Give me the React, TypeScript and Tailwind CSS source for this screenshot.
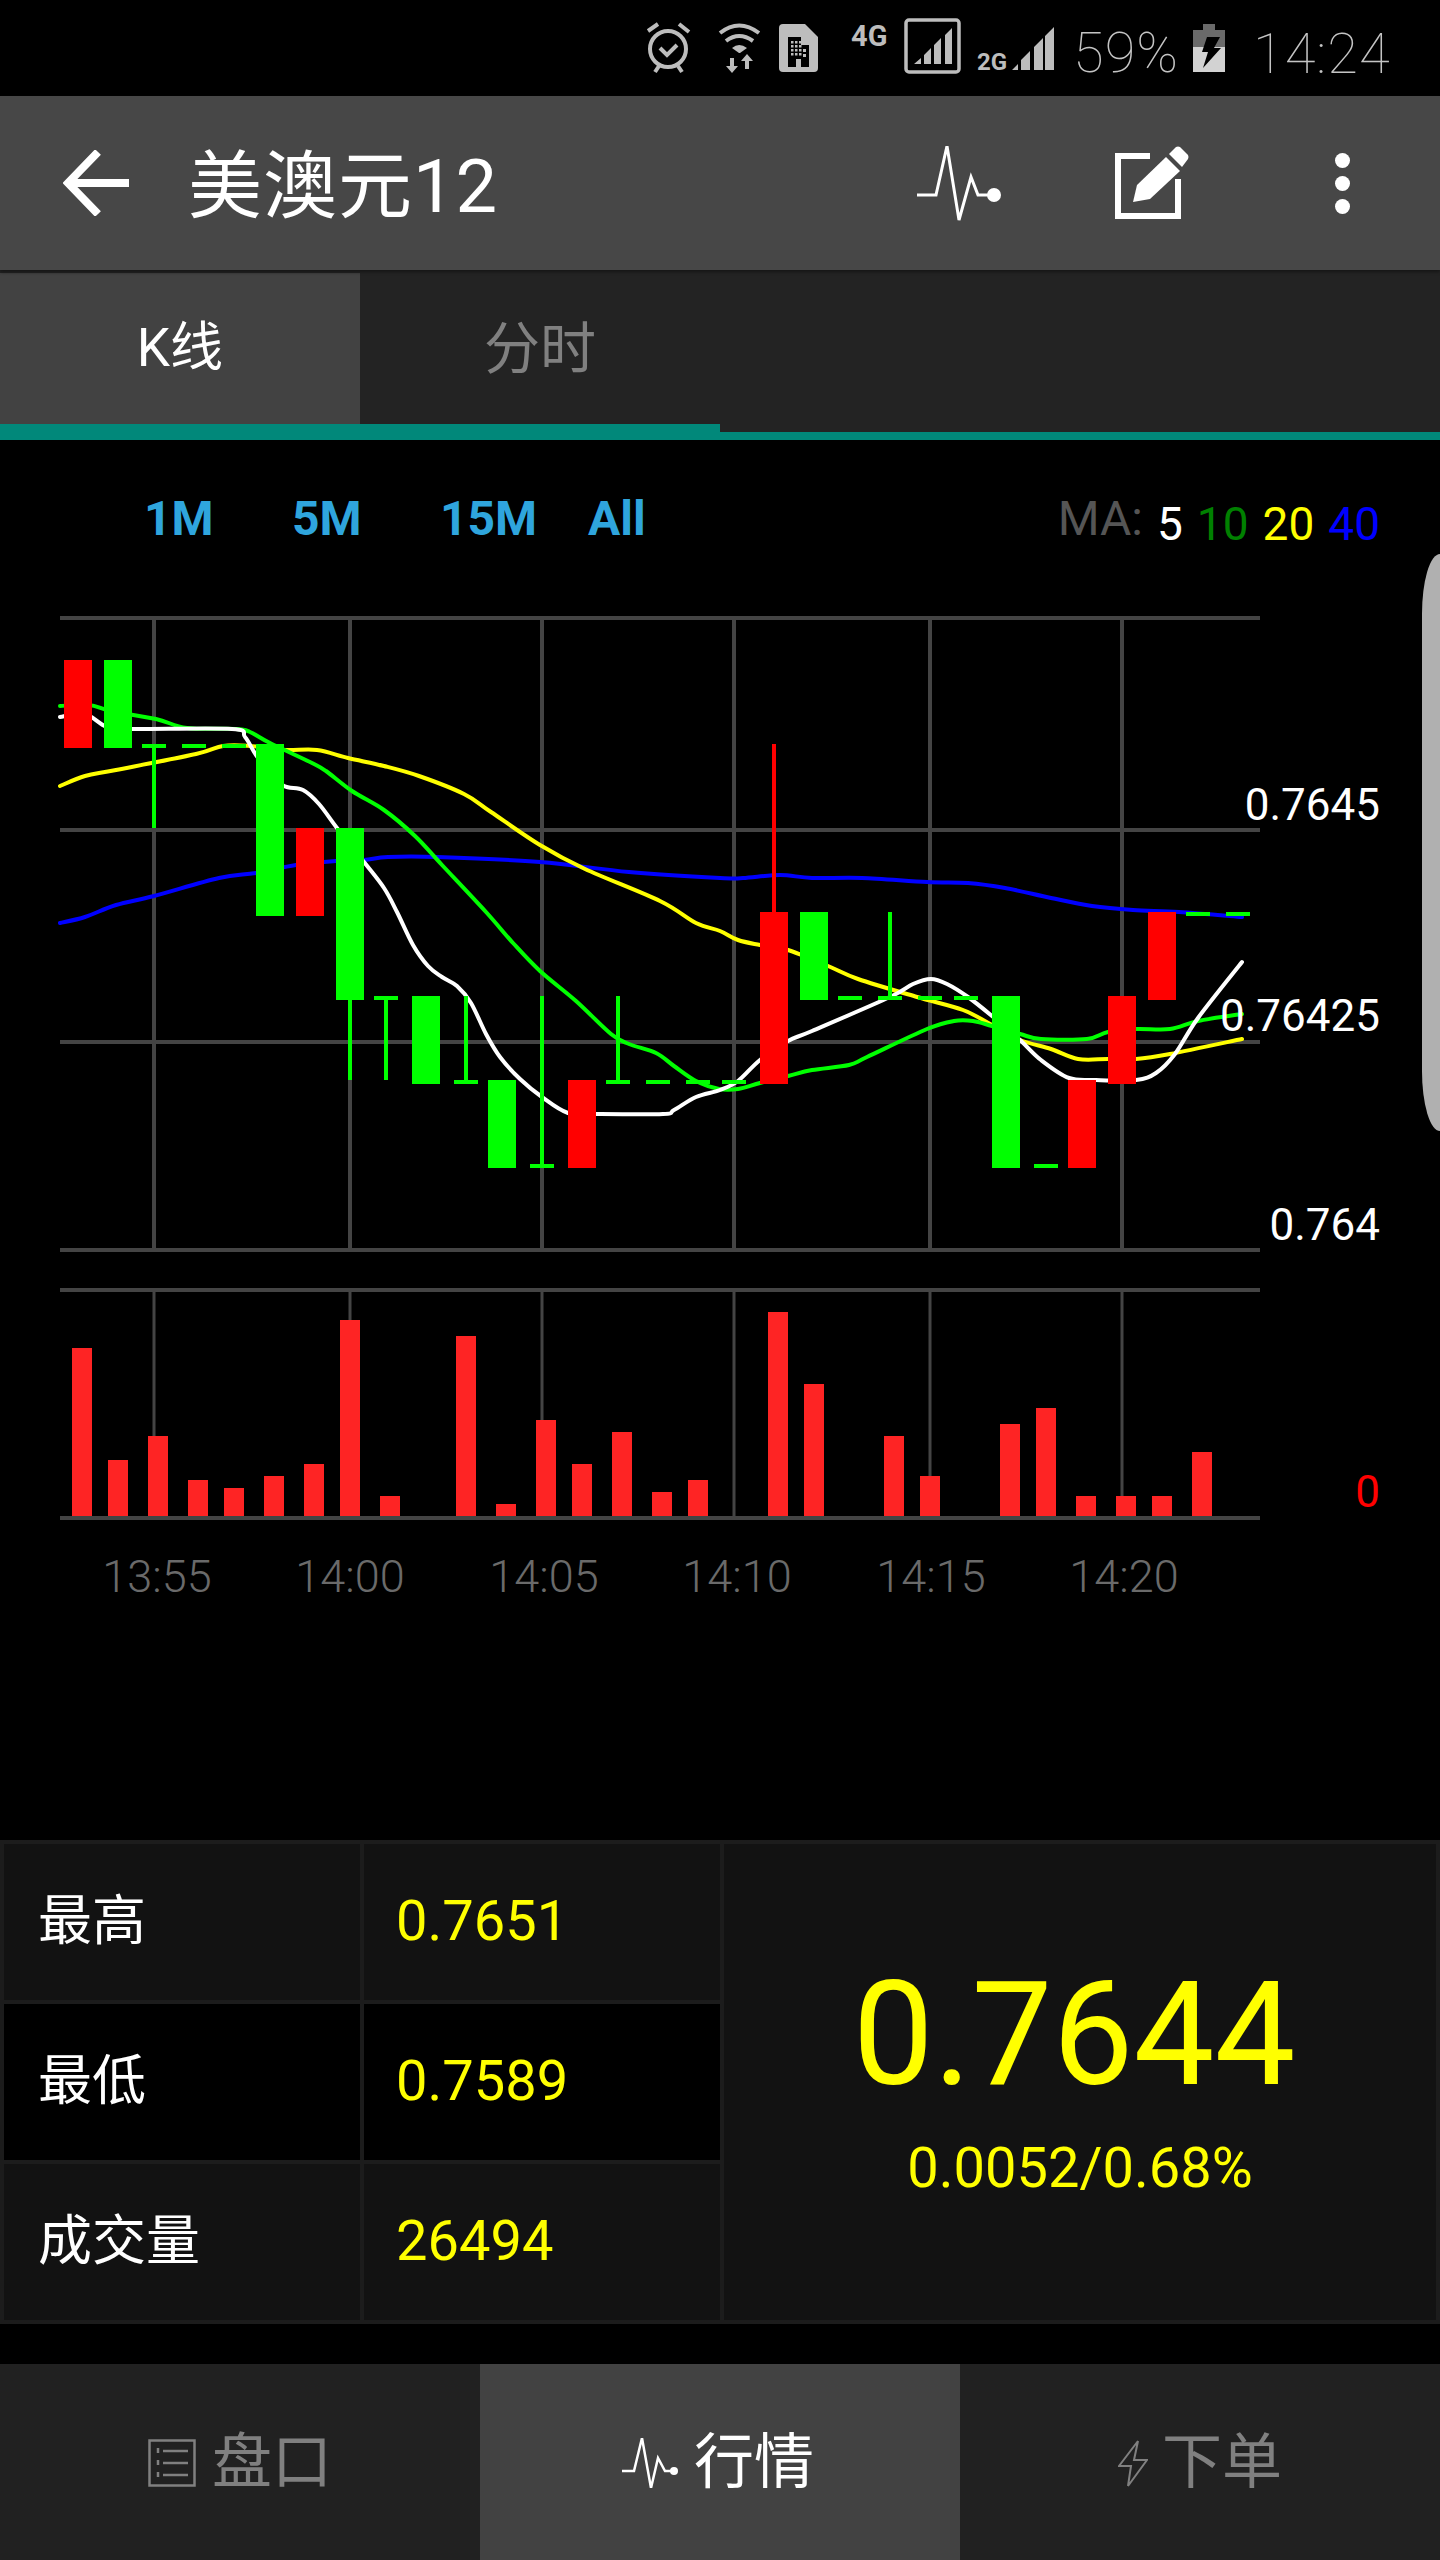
const LINE = '#444444';
const GREEN = '#00ff00';
const RED = '#ff0000';

type Pt = [number, number];

// catmull-rom through the sampled points so the MA lines come out smooth
const smooth = (pts: Pt[]) => {
  let d = `M${pts[0][0]} ${pts[0][1]}`;
  for (let i = 0; i < pts.length - 1; i++) {
    const p0 = pts[i - 1] || pts[i];
    const p1 = pts[i];
    const p2 = pts[i + 1];
    const p3 = pts[i + 2] || p2;
    const c1x = p1[0] + (p2[0] - p0[0]) / 6;
    const c1y = p1[1] + (p2[1] - p0[1]) / 6;
    const c2x = p2[0] - (p3[0] - p1[0]) / 6;
    const c2y = p2[1] - (p3[1] - p1[1]) / 6;
    d += ` C${c1x} ${c1y} ${c2x} ${c2y} ${p2[0]} ${p2[1]}`;
  }
  return d;
};

const ma5: Pt[] = [[60, 717], [85, 714], [107, 727], [132, 729], [232, 729], [245, 737], [256, 755], [270, 772], [284, 786], [303, 790], [319, 804], [337, 828], [364, 862], [384, 888], [397, 912], [413, 945], [428, 966], [442, 977], [457, 986], [471, 1003], [486, 1034], [500, 1057], [520, 1079], [542, 1097], [568, 1113], [596, 1114], [663, 1114], [674, 1110], [696, 1097], [720, 1090], [738, 1081], [760, 1060], [788, 1041], [812, 1031], [890, 997], [913, 984], [931, 979], [947, 984], [968, 997], [992, 1016], [1020, 1040], [1041, 1060], [1069, 1078], [1096, 1080], [1136, 1080], [1156, 1073], [1175, 1054], [1198, 1018], [1242, 962]];
const ma10: Pt[] = [[60, 706], [89, 705], [111, 711], [156, 719], [187, 728], [236, 729], [250, 732], [270, 743], [312, 763], [326, 771], [352, 791], [384, 810], [415, 836], [442, 865], [486, 912], [513, 943], [540, 971], [576, 1001], [611, 1034], [629, 1044], [656, 1053], [674, 1066], [696, 1081], [719, 1089], [738, 1089], [760, 1083], [788, 1076], [812, 1070], [849, 1065], [867, 1057], [927, 1029], [954, 1021], [973, 1021], [992, 1026], [1020, 1034], [1041, 1039], [1087, 1039], [1108, 1032], [1136, 1029], [1170, 1029], [1198, 1021], [1242, 1014]];
const ma20: Pt[] = [[60, 786], [85, 776], [116, 770], [196, 754], [223, 746], [250, 746], [284, 750], [317, 750], [348, 758], [384, 766], [419, 776], [464, 794], [491, 812], [540, 845], [585, 869], [660, 901], [696, 923], [720, 931], [738, 940], [760, 945], [788, 950], [828, 966], [858, 979], [917, 997], [963, 1010], [992, 1025], [1020, 1040], [1051, 1049], [1078, 1059], [1108, 1059], [1136, 1059], [1170, 1054], [1242, 1039]];
const ma40: Pt[] = [[60, 923], [85, 917], [116, 905], [154, 896], [219, 878], [256, 873], [296, 865], [336, 861], [364, 860], [388, 857], [437, 857], [540, 862], [629, 872], [720, 878], [743, 878], [780, 875], [812, 878], [862, 878], [927, 882], [968, 883], [1005, 888], [1051, 898], [1092, 906], [1133, 910], [1179, 912], [1242, 917]];

// x1, y1, x2, y2, colour
const bodies: [number, number, number, number, string][] = [
  [64, 660, 92, 748, RED],
  [104, 660, 132, 748, GREEN],
  [256, 744, 284, 916, GREEN],
  [296, 828, 324, 916, RED],
  [336, 828, 364, 1000, GREEN],
  [412, 996, 440, 1084, GREEN],
  [488, 1080, 516, 1168, GREEN],
  [568, 1080, 596, 1168, RED],
  [760, 912, 788, 1084, RED],
  [800, 912, 828, 1000, GREEN],
  [992, 996, 1020, 1168, GREEN],
  [1068, 1080, 1096, 1168, RED],
  [1108, 996, 1136, 1084, RED],
  [1148, 912, 1176, 1000, RED],
];

// x, y1, y2, colour
const wicks: [number, number, number, string][] = [
  [154, 746, 828, GREEN],
  [350, 1000, 1080, GREEN],
  [386, 998, 1080, GREEN],
  [466, 996, 1082, GREEN],
  [542, 996, 1166, GREEN],
  [618, 996, 1082, GREEN],
  [774, 744, 912, RED],
  [890, 912, 998, GREEN],
];

// x1, x2, y
const dashes: [number, number, number][] = [
  [142, 166, 746], [182, 206, 746], [222, 246, 746],
  [374, 398, 998], [454, 478, 1082], [530, 554, 1166],
  [606, 630, 1082], [646, 670, 1082], [686, 710, 1082], [722, 746, 1082],
  [838, 862, 998], [878, 902, 998], [918, 942, 998], [954, 978, 998],
  [1034, 1058, 1166], [1186, 1210, 914], [1226, 1250, 914],
];

// x, top
const volumes: [number, number][] = [
  [72, 1348], [108, 1460], [148, 1436], [188, 1480], [224, 1488], [264, 1476], [304, 1464], [340, 1320], [380, 1496],
  [456, 1336], [496, 1504], [536, 1420], [572, 1464], [612, 1432], [652, 1492], [688, 1480],
  [768, 1312], [804, 1384], [884, 1436], [920, 1476], [1000, 1424], [1036, 1408], [1076, 1496], [1116, 1496], [1152, 1496], [1192, 1452],
];

const gridX = [154, 350, 542, 734, 930, 1122];
const priceLabels = [
  { text: '0.7645', y: 820 },
  { text: '0.76425', y: 1031 },
  { text: '0.764', y: 1240 },
];
const times: [string, number][] = [['13:55', 157], ['14:00', 350], ['14:05', 544], ['14:10', 737], ['14:15', 931], ['14:20', 1124]];

const Chart = () => (
  <svg className="block w-[1440px] h-[1020px]" viewBox="0 600 1440 1020">
    <g stroke={LINE} strokeWidth="4">
      {[618, 830, 1042, 1250].map((y) => (
        <line key={y} x1="60" x2="1260" y1={y} y2={y} />
      ))}
      {[1290, 1518].map((y) => (
        <line key={y} x1="60" x2="1260" y1={y} y2={y} />
      ))}
      {gridX.map((x) => (
        <line key={x} x1={x} x2={x} y1="618" y2="1250" />
      ))}
      {gridX.map((x) => (
        <line key={x} x1={x} x2={x} y1="1290" y2="1518" strokeWidth="3" />
      ))}
    </g>
    <g fill="none" strokeWidth="4" strokeLinecap="round">
      <path d={smooth(ma40)} stroke="#0000ff" />
      <path d={smooth(ma20)} stroke="#ffff00" />
      <path d={smooth(ma10)} stroke={GREEN} />
      <path d={smooth(ma5)} stroke="#ffffff" />
    </g>
    {wicks.map(([x, y1, y2, c]) => (
      <rect key={x} x={x - 2} y={y1} width="4" height={y2 - y1} fill={c} />
    ))}
    {dashes.map(([x1, x2, y]) => (
      <rect key={x1} x={x1} y={y - 2} width={x2 - x1} height="4" fill={GREEN} />
    ))}
    {bodies.map(([x1, y1, x2, y2, c]) => (
      <rect key={x1} x={x1} y={y1} width={x2 - x1} height={y2 - y1} fill={c} />
    ))}
    {volumes.map(([x, top]) => (
      <rect key={x} x={x} y={top} width="20" height={1516 - top} fill="#fe2424" />
    ))}
    <g className="text-[44px]" textAnchor="end" fill="#ffffff">
      {priceLabels.map((l) => (
        <text key={l.text} x="1380" y={l.y}>
          {l.text}
        </text>
      ))}
      <text x="1380" y="1507" fill={RED}>
        0
      </text>
    </g>
    <g className="text-[45px] font-light" textAnchor="middle" fill="#6a6a6a">
      {times.map(([t, x]) => (
        <text key={t} x={x} y="1592">
          {t}
        </text>
      ))}
    </g>
  </svg>
);

const StatusIcons = () => (
  <>
    {/* alarm */}
    <svg className="absolute left-[646px] top-[22px]" width="46" height="52" fill="none" stroke="#bdbdbd" strokeWidth="4">
      <circle cx="22" cy="27" r="18" />
      <path d="M14 26l7 7 10-10" />
      <path d="M2 9 12 2M33 2l10 8M9 50l4-6M36 50l-4-6" />
    </svg>
    {/* wifi + data arrows */}
    <svg className="absolute left-[716px] top-[20px]" width="48" height="54" viewBox="716 20 48 54" fill="#bdbdbd">
      <g fill="none" stroke="#bdbdbd" strokeWidth="4">
        <path d="M720 33q19-15 39 0" />
        <path d="M726 41q13-10 27 0" />
      </g>
      <path d="M732 48q7-6 15 0l-7 5h-1z" />
      <path d="M730 58h4v8h4l-6 7-6-7h4z" />
      <path d="M745 69h4v-8h4l-6-7-6 7h4z" />
    </svg>
    {/* sim */}
    <svg className="absolute left-[779px] top-[24px]" width="39" height="48" viewBox="779 24 39 48">
      <path d="M783 24h22l13 13v31q0 4-4 4h-31q-4 0-4-4v-40q0-4 4-4z" fill="#bdbdbd" />
      <path d="M788 37h13v8h8v22h-8v-8h-5v8h-8z" fill="#000" />
      <g fill="#bdbdbd">
        {[41, 45, 49, 53].map((y) =>
          [791, 795, 799].map((x) => <rect key={`${x}-${y}`} x={x} y={y} width="2.5" height="2.5" />),
        )}
        <rect x="803" y="49" width="3" height="3" />
        <rect x="803" y="54" width="3" height="3" />
      </g>
    </svg>
    <span className="absolute left-[851px] top-[19px] text-[29px] leading-[34px] font-bold text-[#bdbdbd]">4G</span>
    {/* signal in a box */}
    <svg className="absolute left-[904px] top-[18px]" width="57" height="56" viewBox="904 18 57 56" fill="#bdbdbd">
      <rect x="906" y="20" width="53" height="52" rx="3" fill="none" stroke="#bdbdbd" strokeWidth="3.5" />
      <path d="M914 64l7-6v6zM924 64V55l7-7v16zM934 64V45l7-7v26zM945 64V35l7-7v36z" />
    </svg>
    <span className="absolute left-[977px] top-[48px] text-[24px] leading-[28px] font-bold text-[#bdbdbd]">2G</span>
    <svg className="absolute left-[1012px] top-[26px]" width="43" height="45" viewBox="1012 26 43 45" fill="#bdbdbd">
      <path d="M1012 70l6-6v6zM1021 70V60l9-9v19zM1034 70V47l9-9v32zM1045 70V36l9-9v43z" />
    </svg>
    <span className="absolute left-[1073px] top-[20px] text-[56px] leading-[66px] font-thin tracking-[1px] text-[#c4c4c4]">59%</span>
    {/* charging battery */}
    <svg className="absolute left-[1193px] top-[24px]" width="32" height="48" viewBox="1193 24 32 48">
      <path d="M1203 24h12v6h10v17h-32v-17h10z" fill="#6a6a6a" />
      <rect x="1193" y="47" width="32" height="25" fill="#d2d2d2" />
      <path d="M1207 37h13l-6 11h7l-18 20 5-16h-6z" fill="#000" />
    </svg>
    <span className="absolute left-[1253px] top-[21px] text-[56px] leading-[66px] font-thin tracking-[1px] text-[#c4c4c4]">14:24</span>
  </>
);

const Pulse = ({ className, width }: { className: string; width: number }) => (
  <svg className={className} width={width} viewBox="0 0 85 75" fill="none" stroke="currentColor" strokeWidth="3">
    <path d="M0 49h19l11-49 12 74 12-43 7 18h17" />
    <ellipse cx="77" cy="49" rx="7" ry="7" fill="currentColor" stroke="none" />
  </svg>
);

const App = () => {
  return (
    <div className="relative w-[1440px] h-[2560px] overflow-hidden bg-black font-[Roboto,'Noto_Sans_CJK_SC',sans-serif]">
      <div className="h-24 bg-black">
        <StatusIcons />
      </div>

      <div className="relative z-10 flex h-[174px] items-center bg-[#474747] text-white shadow-[0_2px_3px_#161616]">
        <svg className="ml-[63px]" width="66" height="66" viewBox="0 0 66 66" fill="none" stroke="#fff" strokeWidth="8">
          <path d="M66 33H6" />
          <path d="M35 2 5 33l30 31" />
        </svg>
        <span className="ml-[59px] pt-[8px] text-[74px] leading-none tracking-[1px]">美澳元12</span>
        <Pulse className="ml-auto mr-[113px] text-white" width={85} />
        <svg className="mr-[251px]" width="74" height="74" viewBox="1115 147 74 74">
          <path d="M1150 157h-32v60h60v-37" fill="none" stroke="#fff" strokeWidth="6" />
          <path d="M1133 203l4-17 29-28 14 14-30 28z" fill="#fff" />
          <path d="M1169 155l7-7q2-1 4 0l8 8q1 2 0 4l-6 8z" fill="#fff" />
        </svg>
        <div className="absolute left-[1335px] top-[57px] flex flex-col gap-[8px]">
          <div className="h-[15px] w-[15px] rounded-full bg-white" />
          <div className="h-[15px] w-[15px] rounded-full bg-white" />
          <div className="h-[15px] w-[15px] rounded-full bg-white" />
        </div>
      </div>

      <div className="flex h-[170px] flex-col bg-[#232323]">
        <div className="flex h-[154px] pt-[3px]">
          <div className="flex w-[360px] items-center justify-center bg-[#424242] text-[53px] text-white">K线</div>
          <div className="flex w-[360px] items-center justify-center text-[56px] text-[#808080]">分时</div>
        </div>
        <div className="flex h-4 items-end">
          <div className="h-4 w-[720px] bg-[#01887a]" />
          <div className="h-2 flex-1 bg-[#01887a]" />
        </div>
      </div>

      <div className="flex h-40 items-start pl-[144px] pt-[51px] text-[48px] leading-[56px]">
        <span className="w-[148px] font-bold text-[#2fa5dd]">1M</span>
        <span className="w-[148px] font-bold text-[#2fa5dd]">5M</span>
        <span className="w-[148px] font-bold text-[#2fa5dd]">15M</span>
        <span className="font-bold text-[#2fa5dd]">All</span>
        <div className="ml-auto flex items-end gap-[14px] pr-[60px] text-[46px]">
          <span className="pb-[5px] text-[48px] text-[#555555]">MA:</span>
          <span className="text-white">5</span>
          <span className="text-[#008000]">10</span>
          <span className="text-[#ffff00]">20</span>
          <span className="text-[#0000ff]">40</span>
        </div>
      </div>

      <Chart />

      <div className="mt-[220px] flex h-[484px] gap-1 bg-[#1c1c1c] p-1">
        <div className="grid w-[716px] grid-cols-2 grid-rows-3 gap-1">
          <div className="flex items-center bg-[#121212] pb-[2px] pl-[34px] text-[54px] text-white">最高</div>
          <div className="flex items-center bg-[#121212] pb-[2px] pl-[32px] text-[56px] text-[#ffff00]">0.7651</div>
          <div className="flex items-center bg-black pb-[2px] pl-[34px] text-[54px] text-white">最低</div>
          <div className="flex items-center bg-black pb-[2px] pl-[32px] text-[56px] text-[#ffff00]">0.7589</div>
          <div className="flex items-center bg-[#121212] pb-[2px] pl-[34px] text-[54px] text-white">成交量</div>
          <div className="flex items-center bg-[#121212] pb-[2px] pl-[32px] text-[56px] text-[#ffff00]">26494</div>
        </div>
        <div className="flex flex-1 flex-col items-center bg-[#121212] pt-[119px] text-[#ffff00]">
          <span className="pr-[12px] text-[144px] leading-[144px]">0.7644</span>
          <span className="mt-[33px] text-[56px] leading-[56px]">0.0052/0.68%</span>
        </div>
      </div>

      <div className="mt-10 flex h-[196px] pt-[2px] text-[60px]">
        <div className="-mt-[2px] flex w-[480px] items-center justify-center gap-[16px] bg-[#212121] pt-[2px] text-[#808080]">
          <svg width="48" height="48" viewBox="0 0 48 48" fill="none" stroke="#808080" strokeWidth="2.5">
            <rect x="1.5" y="1.5" width="45" height="45" />
            <path d="M15 12h25M15 24h25M15 36h25" />
            <path d="M10 9v5M10 21v5M10 33v5" />
          </svg>
          <span>盘口</span>
        </div>
        <div className="-mt-[2px] flex w-[480px] items-center justify-center gap-[16px] bg-[#424242] pt-[2px] pr-[4px] text-white">
          <svg width="56" height="50" viewBox="622 2439 56 50" fill="none" stroke="#fff" strokeWidth="2.5">
            <path d="M622 2472h12l8-33 9 50 7-30 7 13h8" />
            <circle cx="674" cy="2472" r="4" fill="#fff" stroke="none" />
          </svg>
          <span>行情</span>
        </div>
        <div className="-mt-[2px] flex w-[480px] items-center justify-center gap-[14px] bg-[#212121] pt-[2px] text-[#808080]">
          <svg width="30" height="48" viewBox="1116 2440 30 48" fill="none" stroke="#808080" strokeWidth="2">
            <path d="M1136 2442l-19 25h12l-3 20 19-26h-13z" />
          </svg>
          <span>下单</span>
        </div>
      </div>

      {/* edge panel handle */}
      <div className="absolute left-[1422px] top-[554px] h-[577px] w-[18px] rounded-tl-[18px_60px] rounded-bl-[18px_60px] bg-[#b0b0b0]" />
    </div>
  );
};

export default App;
